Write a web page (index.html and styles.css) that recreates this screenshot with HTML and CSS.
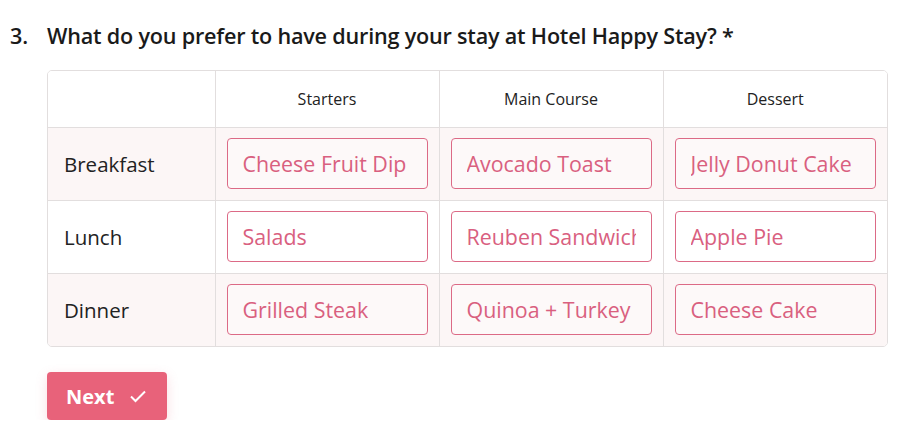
FILE: index.html
```html
<!DOCTYPE html>
<html lang="en">
<head>
  <meta charset="UTF-8">
  <title>Hotel Happy Stay</title>
  <link rel="stylesheet" href="styles.css">
</head>
<body>
<div class="question">
  <h2 class="title"><span class="num">3.</span>What do you prefer to have during your stay at Hotel Happy Stay? *</h2>
  <div class="grid-wrap">
    <table class="grid">
      <thead>
        <tr>
          <th class="corner"></th>
          <th>Starters</th>
          <th>Main Course</th>
          <th>Dessert</th>
        </tr>
      </thead>
      <tbody>
        <tr class="odd">
          <td class="meal">Breakfast</td>
          <td><input type="text" value="Cheese Fruit Dip"></td>
          <td><input type="text" value="Avocado Toast"></td>
          <td><input type="text" value="Jelly Donut Cake"></td>
        </tr>
        <tr>
          <td class="meal">Lunch</td>
          <td><input type="text" value="Salads"></td>
          <td><input type="text" value="Reuben Sandwich"></td>
          <td><input type="text" value="Apple Pie"></td>
        </tr>
        <tr class="odd">
          <td class="meal">Dinner</td>
          <td><input type="text" value="Grilled Steak"></td>
          <td><input type="text" value="Quinoa + Turkey"></td>
          <td><input type="text" value="Cheese Cake"></td>
        </tr>
      </tbody>
    </table>
  </div>
  <button class="next">Next
    <svg width="20" height="20" viewBox="0 0 20 20"><path d="M3 10.5l4.5 4.5L17 5.5" fill="none" stroke="#fff" stroke-width="2"/></svg>
  </button>
</div>
</body>
</html>
```

FILE: styles.css
```css
* {
  box-sizing: border-box;
}

body {
  margin: 0;
  background: #fff;
  font-family: "Open Sans", "Noto Sans", sans-serif;
  color: #1a1a1a;
}

.question {
  padding: 20px 29px 0 47px;
}

.title {
  position: relative;
  margin: 0 0 18px;
  font-size: 21.6px;
  font-weight: 600;
  line-height: 32px;
  letter-spacing: -0.2px;
}

.title .num {
  position: absolute;
  left: -37px;
}

.grid-wrap {
  border: 1px solid #e2dede;
  border-radius: 5px;
  overflow: hidden;
}

.grid {
  width: 100%;
  border-collapse: collapse;
  table-layout: fixed;
}

.grid th {
  height: 56px;
  font-size: 16px;
  font-weight: 400;
  color: #222;
  background: #fff;
  border-left: 1px solid #e2dede;
}

.grid th.corner {
  width: 167px;
  border-left: 0;
}

.grid td {
  height: 73px;
  padding: 0 11px 0 11px;
  border-top: 1px solid #e2dede;
  border-left: 1px solid #e2dede;
}

.grid td.meal {
  border-left: 0;
  padding-left: 16px;
  font-size: 20.5px;
  color: #222;
}

.grid tr.odd td {
  background: #fcf6f6;
}

.grid input {
  display: block;
  width: 100%;
  height: 51px;
  padding: 0 15px;
  border: 1px solid #dc6a86;
  border-radius: 4px;
  background: #fff;
  font-family: inherit;
  font-size: 21.4px;
  color: #d9607f;
  outline: none;
}

.grid tr.odd input {
  background: #fdf9f9;
}

.next {
  display: flex;
  align-items: center;
  gap: 14px;
  margin-top: 25px;
  height: 48px;
  padding: 0 19px;
  border: 0;
  border-radius: 4px;
  background: #e8627a;
  box-shadow: 0 4px 12px rgba(232, 98, 122, 0.22);
  font-family: inherit;
  font-size: 20px;
  font-weight: 700;
  color: #fff;
  cursor: pointer;
}
```
